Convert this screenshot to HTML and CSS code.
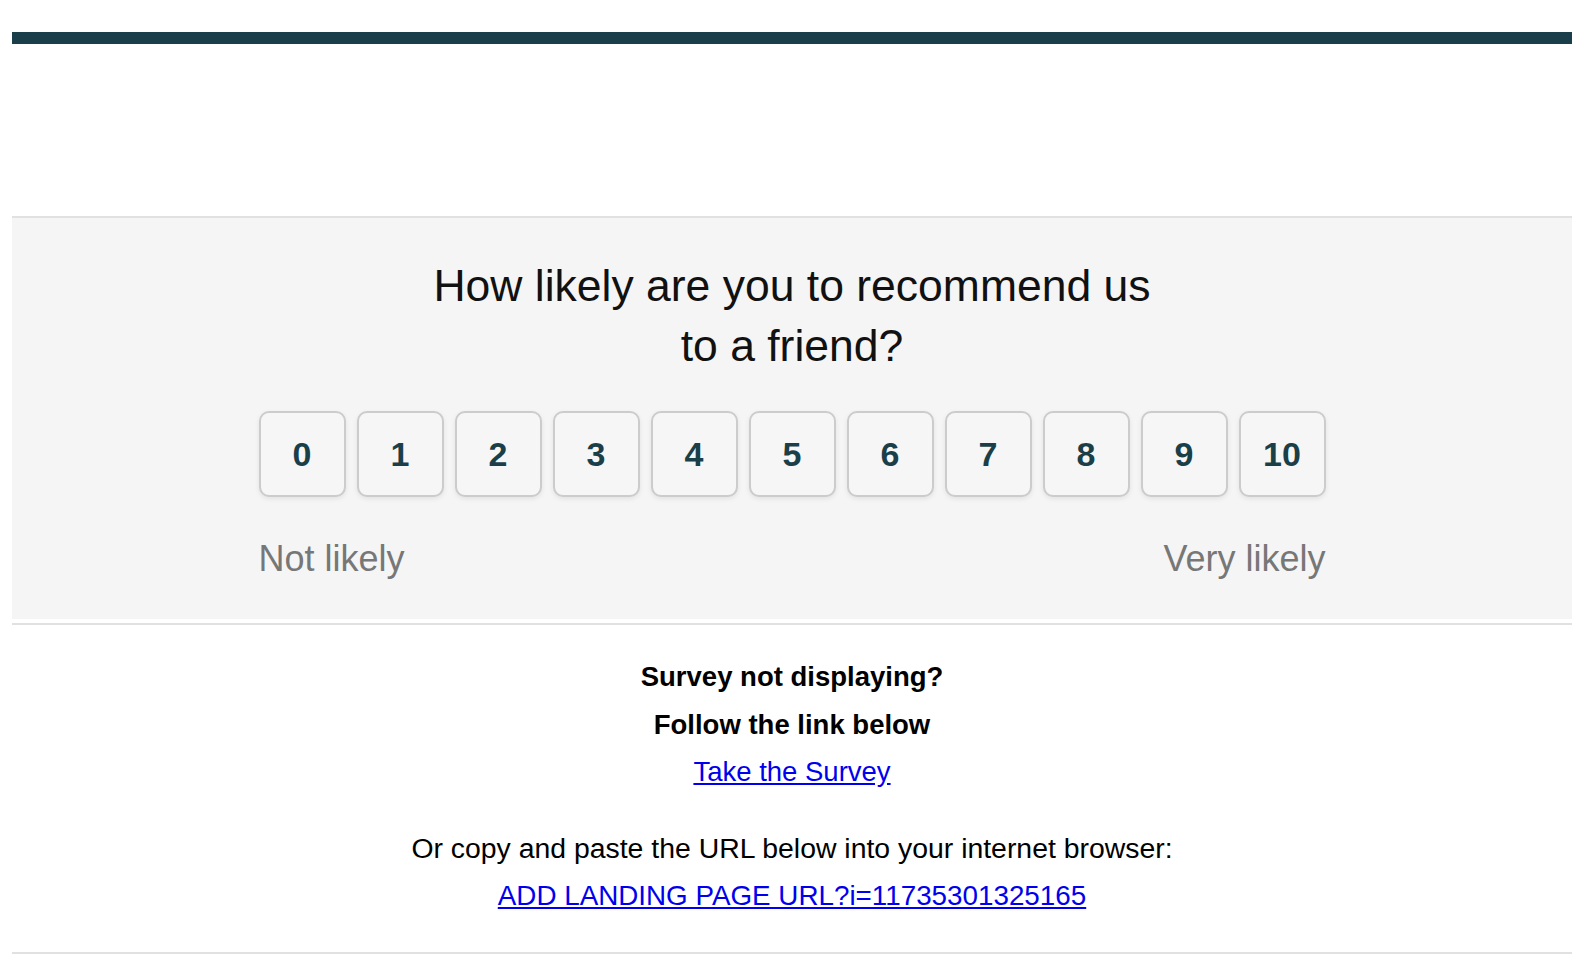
FILE: index.html
```html
<!DOCTYPE html>
<html lang="en">
<head>
<meta charset="utf-8">
<title>Survey</title>
<link rel="stylesheet" href="styles.css">
</head>
<body>
<div class="page">
  <div class="topbar"></div>
  <div class="spacer"></div>
  <section class="survey">
    <h1 class="question">How likely are you to recommend us<br>to a friend?</h1>
    <div class="scale">
      <div class="buttons">
        <span class="btn">0</span>
        <span class="btn">1</span>
        <span class="btn">2</span>
        <span class="btn">3</span>
        <span class="btn">4</span>
        <span class="btn">5</span>
        <span class="btn">6</span>
        <span class="btn">7</span>
        <span class="btn">8</span>
        <span class="btn">9</span>
        <span class="btn">10</span>
      </div>
      <div class="labels">
        <span>Not likely</span>
        <span>Very likely</span>
      </div>
    </div>
  </section>
  <section class="fallback">
    <p class="bold">Survey not displaying?</p>
    <p class="bold">Follow the link below</p>
    <p><a href="#">Take the Survey</a></p>
    <p class="copy">Or copy and paste the URL below into your internet browser:</p>
    <p class="url"><a href="#">ADD LANDING PAGE URL?i=11735301325165</a></p>
  </section>
</div>
</body>
</html>
```

FILE: styles.css
```css
html, body {
  margin: 0;
  padding: 0;
  background: #ffffff;
}

body {
  font-family: "Liberation Sans", Arial, Helvetica, sans-serif;
  color: #000;
}

.page {
  margin: 32px 16px 0 12px;
}

.topbar {
  height: 12px;
  background: #1b3f4a;
}

.spacer {
  height: 172px;
}

.survey {
  border-top: 2px solid #e1e1e1;
  background: #f5f5f5;
  padding: 38px 0 39px;
  text-align: center;
}

.question {
  margin: 0;
  font-size: 44.5px;
  font-weight: normal;
  line-height: 60px;
  color: #111;
}

.scale {
  width: fit-content;
  margin: 35px auto 0;
}

.buttons {
  display: flex;
  gap: 11px;
}

.btn {
  box-sizing: border-box;
  width: 87px;
  height: 86px;
  border: 2px solid #cccccc;
  border-radius: 10px;
  background: #f6f6f6;
  box-shadow: 0 2px 5px rgba(0, 0, 0, 0.08);
  display: flex;
  align-items: center;
  justify-content: center;
  font-size: 34px;
  font-weight: bold;
  color: #1a3f49;
}

.labels {
  display: flex;
  justify-content: space-between;
  margin-top: 41px;
  font-size: 36px;
  line-height: 42px;
  color: #777777;
}

.fallback {
  margin-top: 4px;
  border-top: 2px solid #e1e1e1;
  border-bottom: 2px solid #e1e1e1;
  padding: 28px 0 31px;
  text-align: center;
  font-size: 27.5px;
}

.fallback p {
  margin: 0;
  line-height: 47.5px;
}

.fallback .bold {
  font-weight: bold;
}

.fallback .copy {
  margin-top: 29px;
  font-size: 28.4px;
}

.fallback .url {
  font-size: 27.8px;
  line-height: 48.5px;
}

.fallback a {
  color: #0000ee;
  text-decoration: underline;
}
```
